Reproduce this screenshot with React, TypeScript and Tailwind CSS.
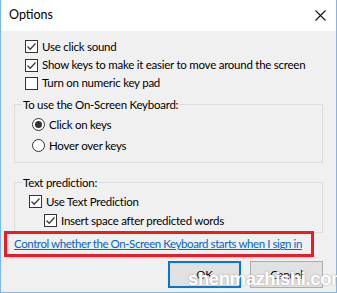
import { FC, ReactNode } from "react";

const font = { fontFamily: 'Lato, "Liberation Sans", Arial, sans-serif' };

const CheckBox: FC<{ checked?: boolean }> = ({ checked }) => (
  <span className="flex h-[13px] w-[13px] shrink-0 items-center justify-center border border-[#333333] bg-white">
    {checked && (
      <svg width="11" height="11" viewBox="0 0 11 11">
        <path d="M1.5 5.5 L4.2 8.2 L9.5 2.5" fill="none" stroke="#3c3c3c" strokeWidth="1.3" />
      </svg>
    )}
  </span>
);

const Radio: FC<{ checked?: boolean }> = ({ checked }) => (
  <span className="flex h-[13px] w-[13px] shrink-0 items-center justify-center rounded-full border border-[#333333] bg-white">
    {checked && <span className="h-[7px] w-[7px] rounded-full bg-[#333333]" />}
  </span>
);

const Row: FC<{ control: ReactNode; label: string; className?: string }> = ({ control, label, className }) => (
  <div className={`flex items-center gap-[4px] ${className ?? ""}`}>
    {control}
    <span className="whitespace-nowrap">{label}</span>
  </div>
);

const GroupBox: FC<{ title: string; className?: string; children: ReactNode }> = ({ title, className, children }) => (
  <fieldset className={`mx-[13px] border border-[#dcdcdc] ${className ?? ""}`}>
    <legend className="ml-[7px] px-[1px] leading-[15px]">{title}</legend>
    {children}
  </fieldset>
);

export default function App() {
  return (
    <div className="relative h-[293px] w-[337px] overflow-hidden text-[11.5px] tracking-[-0.25px] text-black" style={font}>
      <div className="flex h-full flex-col border-x border-b border-[#7fb6ee] bg-[#f0f0f0]">
        <div className="flex h-[31px] shrink-0 items-center justify-between bg-white pl-[8px] pr-[10px]">
          <span className="text-[12.5px] tracking-normal">Options</span>
          <svg width="11" height="11" viewBox="0 0 11 11">
            <path d="M0.5 0.5 L10.5 10.5 M10.5 0.5 L0.5 10.5" stroke="#111" strokeWidth="1.1" />
          </svg>
        </div>

        <div className="mt-[6px] flex flex-col pl-[24px]">
          <Row className="h-[19px]" control={<CheckBox checked />} label="Use click sound" />
          <Row className="h-[18px]" control={<CheckBox checked />} label="Show keys to make it easier to move around the screen" />
          <Row className="h-[18px]" control={<CheckBox />} label="Turn on numeric key pad" />
        </div>

        <GroupBox title="To use the On-Screen Keyboard:" className="mt-[5px] h-[66px]">
          <div className="flex flex-col pl-[17px] pt-[2px]">
            <Row className="h-[21px]" control={<Radio checked />} label="Click on keys" />
            <Row className="h-[21px]" control={<Radio />} label="Hover over keys" />
          </div>
        </GroupBox>

        <GroupBox title="Text prediction:" className="mt-[12px] h-[58px]">
          <div className="flex flex-col pl-[14px] pt-[2px]">
            <Row className="h-[19px]" control={<CheckBox checked />} label="Use Text Prediction" />
            <Row className="h-[19px] pl-[15px]" control={<CheckBox checked />} label="Insert space after predicted words" />
          </div>
        </GroupBox>

        <div className="-mt-[2px] ml-[3px] flex h-[26px] w-[310px] items-center border-[3px] border-[#ed1c24] pl-[7px]">
          <a href="#" className="whitespace-nowrap tracking-[-0.42px] text-[#0066cc] underline">
            Control whether the On-Screen Keyboard starts when I sign in
          </a>
        </div>

        <div className="mt-[4px] flex justify-end gap-[9px] pr-[13px]">
          <button className="h-[27px] w-[73px] border-2 border-[#0078d7] bg-[#e1e1e1]">OK</button>
          <button className="h-[27px] w-[73px] border border-[#adadad] bg-[#e1e1e1]">Cancel</button>
        </div>
      </div>

      <span
        className="pointer-events-none absolute left-[188px] top-[265px] whitespace-nowrap text-[18.5px] font-bold tracking-[-0.4px] text-white [text-shadow:0_0_2px_#9a9a9a]"
        style={{ fontFamily: '"Liberation Sans", Arial, sans-serif' }}
      >
        shenmazhishi.com
      </span>
    </div>
  );
}
